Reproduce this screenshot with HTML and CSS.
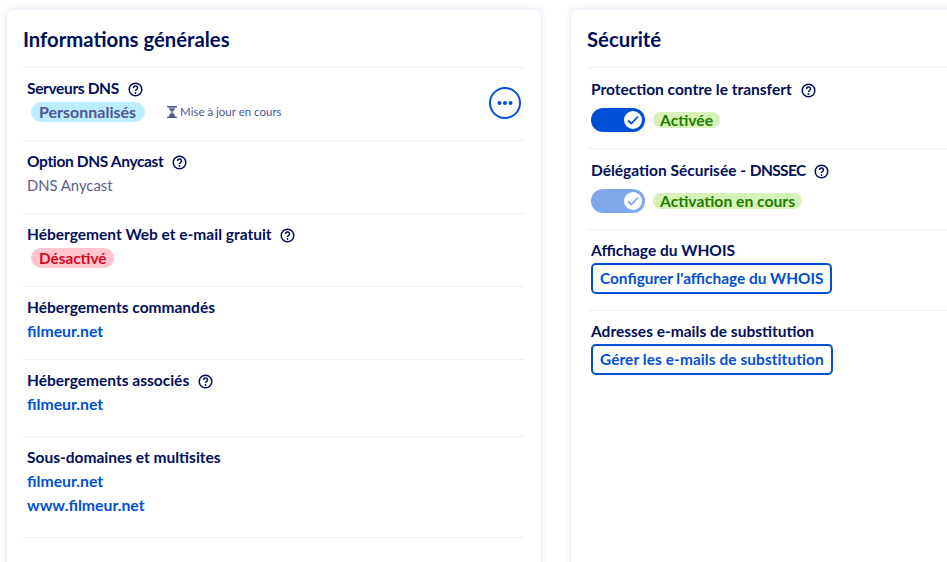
FILE: index.html
```html
<!DOCTYPE html>
<html lang="fr">
<head>
<meta charset="utf-8">
<title>Domaine</title>
<link rel="stylesheet" href="styles.css">
</head>
<body>
<main class="layout">
  <section class="card">
    <h2 class="card-title">Informations générales</h2>
    <div class="row row-action">
      <div>
        <div class="label"><span class="tight">Serveurs DNS</span> <svg class="help" viewBox="0 0 16 16"><circle cx="8" cy="8" r="6.700"/><path d="M5.900 6.300a2.100 2.100 0 1 1 3.200 1.800c-.7.400-1.100.8-1.100 1.600"/><circle class="dot" cx="8" cy="11.700" r="1"/></svg></div>
        <div class="value">
          <span class="badge badge-info">Personnalisés</span>
          <span class="pending"><svg class="hourglass" viewBox="0 0 10 12"><path class="glass" d="M1.500 1C1.500 4 3.500 5 4.300 6 3.500 7 1.500 8 1.500 11h7C8.500 8 6.500 7 5.700 6 6.500 5 8.500 4 8.500 1z"/><path d="M0 0h10v1.300H0zM0 10.700h10V12H0zM2.200 10.700C3 9 4.300 8 5 7.300 5.700 8 7 9 7.800 10.700zM2.600 3h4.800C6.800 4 5.600 4.800 5 5.300 4.400 4.800 3.200 4 2.600 3z"/></svg>Mise à jour en cours</span>
        </div>
      </div>
      <button class="more" aria-label="Actions"><svg viewBox="0 0 16 4"><circle cx="2.500" cy="2" r="2"/><circle cx="8" cy="2" r="2"/><circle cx="13.500" cy="2" r="2"/></svg></button>
    </div>
    <div class="row">
      <div class="label"><span class="tight">Option DNS Anycast</span> <svg class="help" viewBox="0 0 16 16"><circle cx="8" cy="8" r="6.700"/><path d="M5.900 6.300a2.100 2.100 0 1 1 3.200 1.800c-.7.400-1.100.8-1.100 1.600"/><circle class="dot" cx="8" cy="11.700" r="1"/></svg></div>
      <div class="value muted">DNS Anycast</div>
    </div>
    <div class="row">
      <div class="label">Hébergement Web et e-mail gratuit <svg class="help" viewBox="0 0 16 16"><circle cx="8" cy="8" r="6.700"/><path d="M5.900 6.300a2.100 2.100 0 1 1 3.200 1.800c-.7.400-1.100.8-1.100 1.600"/><circle class="dot" cx="8" cy="11.700" r="1"/></svg></div>
      <div class="value"><span class="badge badge-error">Désactivé</span></div>
    </div>
    <div class="row">
      <div class="label">Hébergements commandés</div>
      <div class="value"><a class="link" href="#">filmeur.net</a></div>
    </div>
    <div class="row row-tall">
      <div class="label">Hébergements associés <svg class="help" viewBox="0 0 16 16"><circle cx="8" cy="8" r="6.700"/><path d="M5.900 6.300a2.100 2.100 0 1 1 3.200 1.800c-.7.400-1.100.8-1.100 1.600"/><circle class="dot" cx="8" cy="11.700" r="1"/></svg></div>
      <div class="value"><a class="link" href="#">filmeur.net</a></div>
    </div>
    <div class="row row-list">
      <div class="label">Sous-domaines et multisites</div>
      <div class="value"><a class="link" href="#">filmeur.net</a></div>
      <div class="value"><a class="link" href="#">www.filmeur.net</a></div>
    </div>
  </section>

  <section class="card">
    <h2 class="card-title">Sécurité</h2>
    <div class="row row-side">
      <div class="label">Protection contre le transfert <svg class="help" viewBox="0 0 16 16"><circle cx="8" cy="8" r="6.700"/><path d="M5.900 6.300a2.100 2.100 0 1 1 3.200 1.800c-.7.400-1.100.8-1.100 1.600"/><circle class="dot" cx="8" cy="11.700" r="1"/></svg></div>
      <div class="toggle-line">
        <span class="toggle"><span class="knob"><svg viewBox="0 0 12 10"><path d="M1 5.500 4.300 8.500 11 1.500"/></svg></span></span>
        <span class="badge badge-success">Activée</span>
      </div>
    </div>
    <div class="row row-side">
      <div class="label">Délégation Sécurisée - <span class="caps">DNSSEC</span> <svg class="help" viewBox="0 0 16 16"><circle cx="8" cy="8" r="6.700"/><path d="M5.900 6.300a2.100 2.100 0 1 1 3.200 1.800c-.7.400-1.100.8-1.100 1.600"/><circle class="dot" cx="8" cy="11.700" r="1"/></svg></div>
      <div class="toggle-line">
        <span class="toggle toggle-pending"><span class="knob"><svg viewBox="0 0 12 10"><path d="M1 5.500 4.300 8.500 11 1.500"/></svg></span></span>
        <span class="badge badge-success">Activation en cours</span>
      </div>
    </div>
    <div class="row row-side row-button">
      <div class="label">Affichage du WHOIS</div>
      <a class="button" href="#">Configurer l'affichage du WHOIS</a>
    </div>
    <div class="row row-side row-button">
      <div class="label">Adresses e-mails de substitution</div>
      <a class="button button-wide" href="#">Gérer les e-mails de substitution</a>
    </div>
  </section>
</main>
</body>
</html>
```
FILE: styles.css
```css
* { box-sizing: border-box; }
html, body { margin: 0; height: 100%; overflow: hidden; background: #fff; }
body { font-family: Lato, "Noto Sans", sans-serif; color: #000e5c; font-size: 15px; }
.layout { display: grid; grid-template-columns: 534px 534px; gap: 30px; padding: 10px 0 0 7px; width: 1200px; height: 600px; }
.card { background: #fff; border-radius: 6px; box-shadow: 0 0 6px 1px #e6e4f7; padding: 0 16px; height: 700px; }
.card-title { margin: 0; height: 57px; font-size: 20.300px; line-height: 58px; font-weight: 700; color: #000e5c; }
.row { border-top: 1px solid #eef0f3; height: 73px; padding: 8px 4px 0; }
.row-action { display: flex; justify-content: space-between; align-items: flex-start; }
.row-tall { height: 77px; }
.row-list { border-bottom: 1px solid #eef0f3; height: 102px; }
.label { font-weight: 700; font-size: 15.500px; line-height: 24px; color: #000e5c; }
.tight { letter-spacing: -.35px; }
.caps { letter-spacing: -.65px; }
.value { line-height: 24px; font-size: 14.800px; display: flex; align-items: center; height: 24px; }
.muted { color: #5f5a8c; }
.link { color: #0050d7; font-weight: 700; font-size: 15.800px; text-decoration: none; }
.help { width: 15px; height: 15px; margin-left: 5px; vertical-align: -3px; fill: none; stroke: #000e5c; stroke-width: 1.600; }
.help .dot { fill: #000e5c; stroke: none; }
.badge { display: inline-block; border-radius: 10px; font-weight: 700; font-size: 15.700px; line-height: 20px; height: 20px; padding: 0 8px; margin-left: 4px; }
.badge-info { background: #bcedfe; color: #4d5693; font-size: 16px; padding-right: 9px; }
.badge-error { background: #ffc5ce; color: #d5061f; font-size: 15.300px; }
.badge-success { background: #d6f2b8; color: #1d7d00; height: 16px; line-height: 16px; padding: 0 7px; margin-left: 8px; }
.pending { display: inline-flex; align-items: center; margin-left: 22px; font-size: 11.500px; color: #4d5693; }
.hourglass { width: 10px; height: 12px; margin-right: 3px; fill: #4d5693; }
.hourglass .glass { fill: #9296c2; }
.more { width: 32px; height: 32px; margin-top: 11px; border: 2px solid #0050d7; border-radius: 50%; background: #fff; padding: 0; display: flex; align-items: center; justify-content: center; }
.more svg { width: 16px; height: 4px; fill: #0050d7; }
.row-side { height: 81px; padding: 9px 4px 0; }
.row-button { padding-top: 8px; }
.toggle-line { display: flex; align-items: center; margin-top: 7px; }
.toggle { width: 54px; height: 24px; border-radius: 12px; background: #0050d7; display: flex; align-items: center; justify-content: flex-end; padding-right: 3px; }
.toggle-pending { background: #80a7eb; }
.knob { width: 18px; height: 18px; border-radius: 50%; background: #fff; display: flex; align-items: center; justify-content: center; }
.knob svg { width: 12px; height: 10px; fill: none; stroke: #0050d7; stroke-width: 1.800; }
.toggle-pending .knob svg { stroke: #80a7eb; }
.button { display: inline-block; height: 31px; margin-top: 1px; line-height: 27px; border: 2px solid #0050d7; border-radius: 5px; padding: 0 7px; color: #0050d7; font-weight: 700; font-size: 15.400px; text-decoration: none; background: #fff; }
.button-wide { letter-spacing: .1px; }
```
